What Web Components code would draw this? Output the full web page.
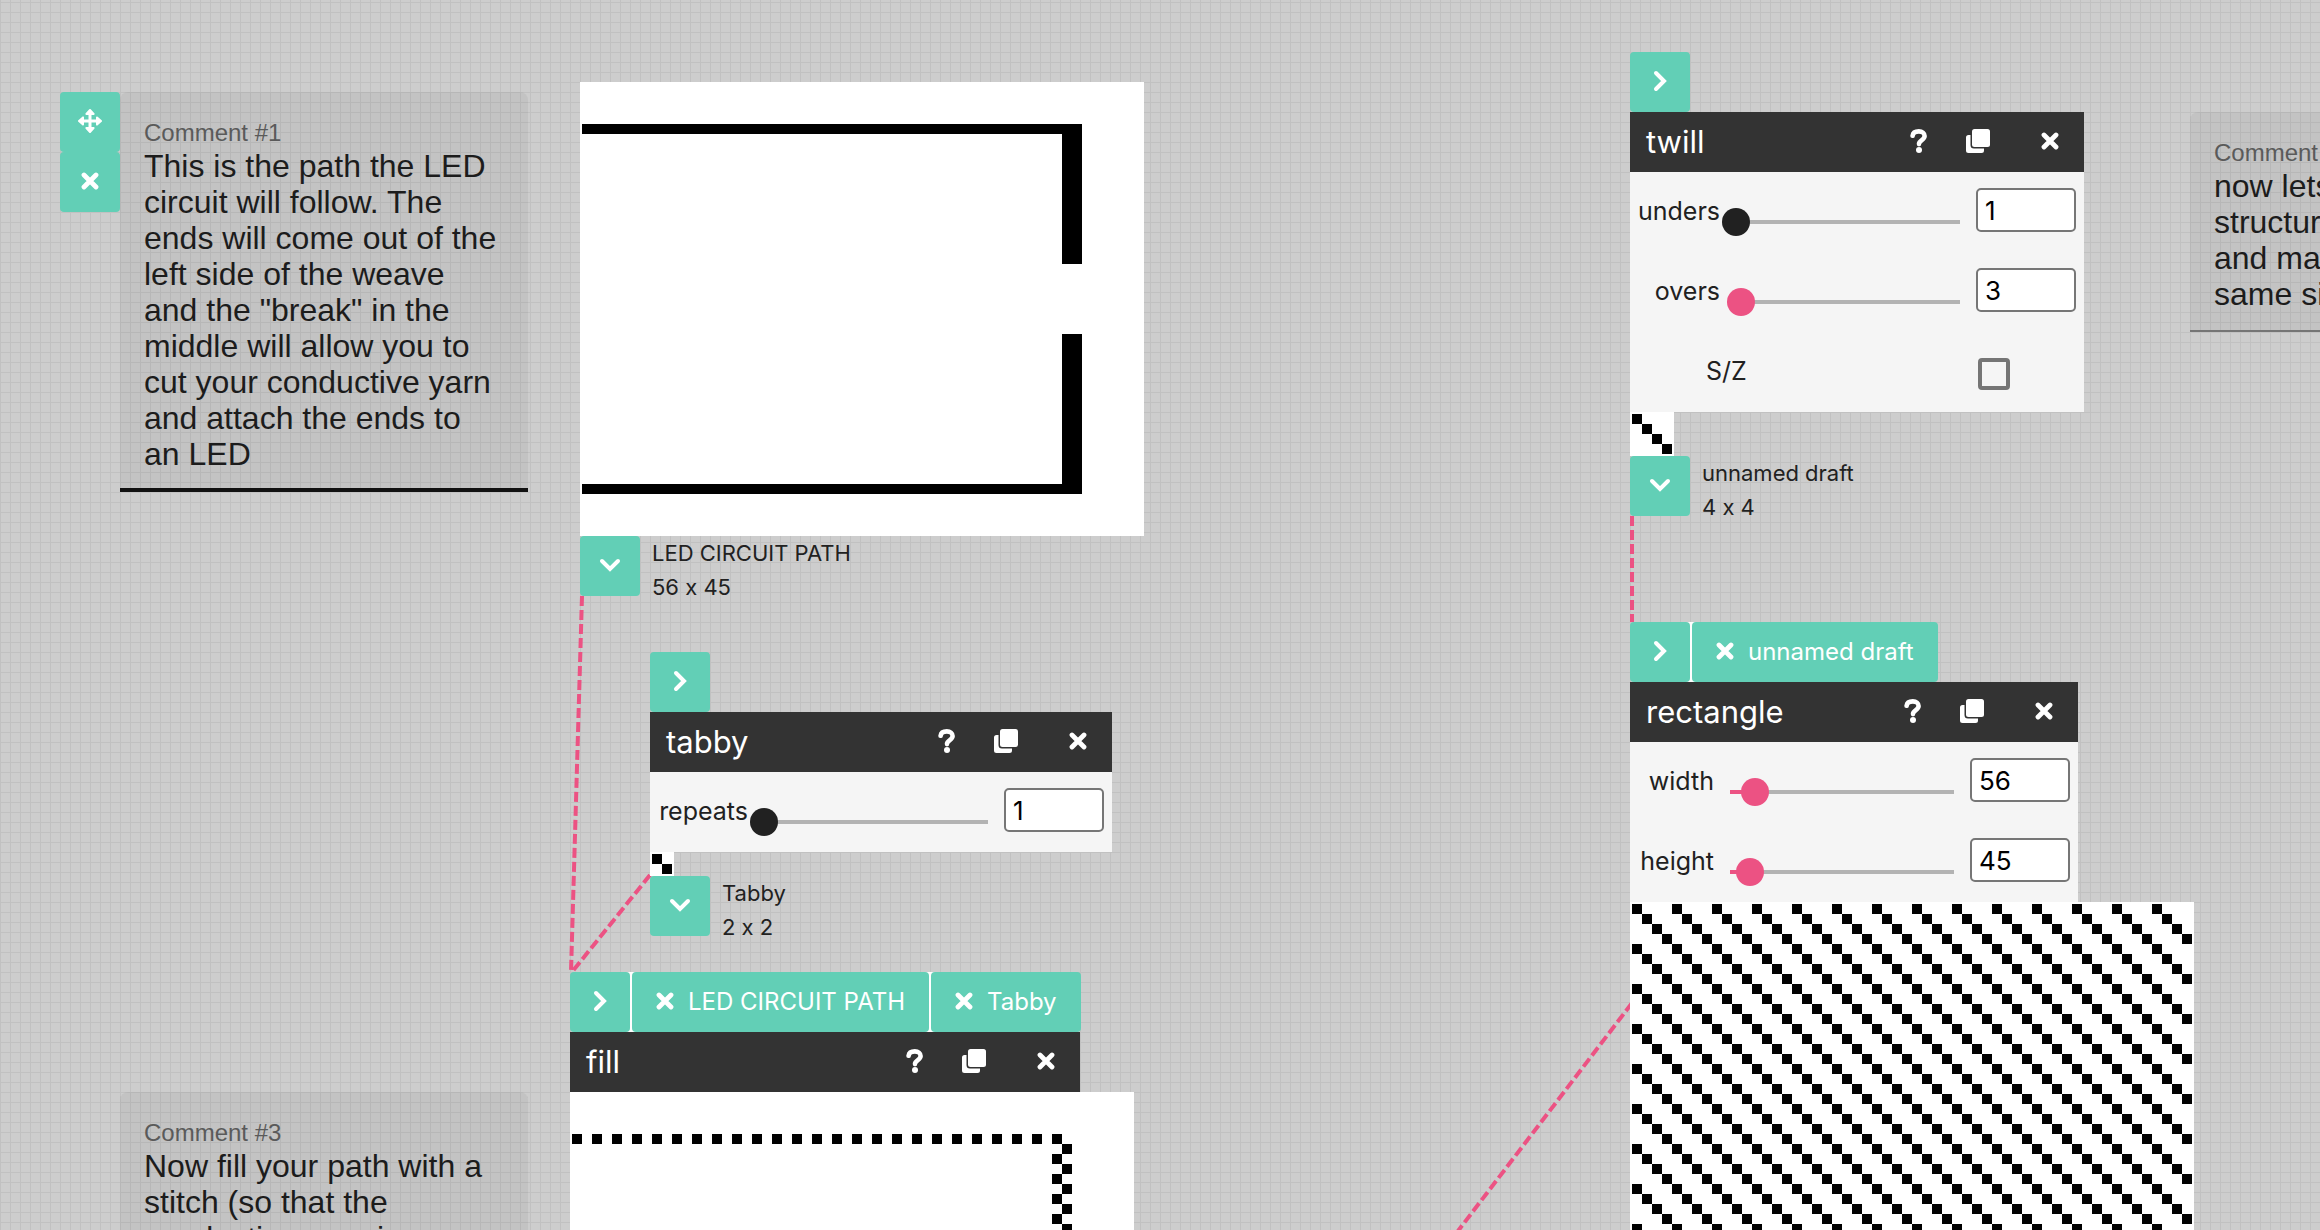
<!DOCTYPE html>
<html lang="en">
<head>
<meta charset="utf-8">
<title>Draft workspace</title>
<style>
  html, body { margin: 0; height: 100%; }
  body { overflow: hidden; color: #212121; font-family: Inter, "Liberation Sans", sans-serif; font-feature-settings: "calt" 0; }
</style>
</head>
<body>
<draft-workspace>
  <workspace-note style="left:60px;top:92px" heading="Comment #1" selected>This is the path the LED circuit will follow. The ends will come out of the left side of the weave and the "break" in the middle will allow you to cut your conductive yarn and attach the ends to an LED</workspace-note>
  <workspace-note style="left:120px;top:1092px" heading="Comment #3">Now fill your path with a stitch (so that the conductive yarn is continuously held in the cloth)</workspace-note>
  <workspace-note style="left:2190px;top:112px" heading="Comment #2">now lets create a twill structure of your choice and make sure it is the same size as the path</workspace-note>

  <workspace-node style="left:580px;top:82px">
    <draft-view pattern="circuit" cols="56" rows="45"></draft-view>
    <draft-outlet name="LED CIRCUIT PATH" size="56 x 45"></draft-outlet>
  </workspace-node>

  <workspace-node style="left:650px;top:652px">
    <inlet-bar></inlet-bar>
    <operation-header name="tabby"></operation-header>
    <param-list style="--label:90px">
      <param-slider label="repeats" value="1" max="100"></param-slider>
    </param-list>
    <draft-view pattern="tabby" cols="2" rows="2"></draft-view>
    <draft-outlet name="Tabby" size="2 x 2"></draft-outlet>
  </workspace-node>

  <workspace-node style="left:570px;top:972px">
    <inlet-bar inlets="LED CIRCUIT PATH|Tabby"></inlet-bar>
    <operation-header name="fill" style="--w:510px"></operation-header>
    <draft-view pattern="filled" cols="56" rows="45"></draft-view>
  </workspace-node>

  <workspace-node style="left:1630px;top:52px">
    <inlet-bar></inlet-bar>
    <operation-header name="twill"></operation-header>
    <param-list style="--label:82px">
      <param-slider label="unders" value="1" max="100"></param-slider>
      <param-slider label="overs" value="3" max="100"></param-slider>
      <param-check label="S/Z"></param-check>
    </param-list>
    <draft-view pattern="twill" cols="4" rows="4"></draft-view>
    <draft-outlet name="unnamed draft" size="4 x 4"></draft-outlet>
  </workspace-node>

  <workspace-node style="left:1630px;top:622px">
    <inlet-bar inlets="unnamed draft"></inlet-bar>
    <operation-header name="rectangle"></operation-header>
    <param-list style="--label:76px">
      <param-slider label="width" value="56" max="500"></param-slider>
      <param-slider label="height" value="45" max="500"></param-slider>
    </param-list>
    <draft-view pattern="twill" cols="56" rows="45"></draft-view>
  </workspace-node>
</draft-workspace>

<script>
const ICONS = {
  right: '<svg width="24" height="24" viewBox="0 0 24 24"><path d="M8 4l8 8-8 8" fill="none" stroke="#fff" stroke-width="4" stroke-linecap="round"/></svg>',
  down: '<svg width="24" height="24" viewBox="0 0 24 24"><path d="M4 8l8 8 8-8" fill="none" stroke="#fff" stroke-width="4" stroke-linecap="round"/></svg>',
  close: '<svg width="18" height="18" viewBox="0 0 18 18"><path d="M3 3l12 12M15 3L3 15" fill="none" stroke="#fff" stroke-width="4.800" stroke-linecap="round"/></svg>',
  move: '<svg width="24" height="24" viewBox="0 0 24 24"><path d="M12 3v18M3 12h18" stroke="#fff" stroke-width="3"/><path d="M12 1l3.600 4H8.400zM12 23l-3.600-4h7.200zM1 12l4-3.600v7.200zM23 12l-4 3.600V8.400z" fill="#fff" stroke="#fff" stroke-width="2" stroke-linejoin="round"/></svg>',
  help: '<svg width="18" height="24" viewBox="0 0 18 24"><path d="M2.600 6.800C3 4 5.200 2.400 8.800 2.400c3.600 0 5.800 1.800 5.800 4.700 0 4-5.600 3.900-5.600 8" fill="none" stroke="#fff" stroke-width="4.600" stroke-linecap="round"/><circle cx="9" cy="21" r="3" fill="#fff"/></svg>',
  copy: '<svg width="24" height="24" viewBox="0 0 24 24"><rect x="6" y="0" width="18" height="18" rx="2.500" fill="#fff"/><path d="M4.500 6H2.500A2.500 2.500 0 0 0 0 8.500v13A2.500 2.500 0 0 0 2.500 24h13a2.500 2.500 0 0 0 2.500-2.500v-2H8A3.500 3.500 0 0 1 4.500 16z" fill="#fff"/></svg>'
};
const BUTTON_CSS = `
  button { display: flex; align-items: center; justify-content: center; box-sizing: border-box;
    height: 60px; min-width: 60px; margin: 0; padding: 0; border: 0; border-radius: 4px;
    background: #62cfb6; color: #fff; font: 24px/60px Inter, "Liberation Sans", sans-serif; }
  svg { display: block; flex: none; margin-bottom: 2px; }`;

class Base extends HTMLElement {
  constructor() { super(); this.attachShadow({ mode: 'open' }); }
  connectedCallback() {
    this.shadowRoot.innerHTML = `<style>${this.css()}</style>${this.html()}`;
    this.ready();
  }
  attr(name) { return this.getAttribute(name) || ''; }
  ready() {}
}

customElements.define('draft-workspace', class extends Base {
  css() { return `
    :host { display: block; position: relative; height: 100vh; overflow: hidden; background-color: #cdcdcd;
      background-image: linear-gradient(90deg, #c1c1c1 1px, transparent 1px), linear-gradient(#c1c1c1 1px, transparent 1px);
      background-size: 10px 10px; background-position: 0 2px; }
    svg { position: absolute; inset: 0; width: 100%; height: 100%; }
    path { fill: none; stroke: #ec5283; stroke-width: 4; stroke-dasharray: 10 4; }`; }
  html() { return `<svg aria-hidden="true"><path d="M582 596L571 972"/><path d="M650 875L572 972"/><path d="M1632 516V622"/><path d="M1632 1003L1458 1231"/></svg><slot></slot>`; }
});

customElements.define('workspace-node', class extends Base {
  css() { return `:host { position: absolute; display: flex; flex-direction: column; align-items: flex-start; }`; }
  html() { return `<slot></slot>`; }
});

customElements.define('workspace-note', class extends Base {
  css() { return BUTTON_CSS + `
    :host { position: absolute; display: flex; align-items: flex-start; font-family: "Liberation Sans", sans-serif; }
    article { box-sizing: border-box; width: 408px; padding: 26px 24px 20px; border-radius: 8px 8px 0 0;
      background: rgba(0,0,0,.047); box-shadow: inset 0 -2px #757575; }
    :host([selected]) article { box-shadow: inset 0 -4px #111; }
    h2 { margin: 0; font-size: 24px; line-height: 30px; font-weight: 400; color: #5a5a5a; }
    p { margin: 0; font-size: 32px; line-height: 36px; color: #1c1c1c; }`; }
  html() {
    const tools = this.hasAttribute('selected')
      ? `<div><button aria-label="Move">${ICONS.move}</button><button aria-label="Delete">${ICONS.close}</button></div>` : '';
    return `${tools}<article><h2>${this.attr('heading')}</h2><p><slot></slot></p></article>`;
  }
});

customElements.define('inlet-bar', class extends Base {
  css() { return BUTTON_CSS + `
    :host { display: flex; gap: 2px; background: linear-gradient(#fff, #fff) 30px 0 / calc(100% - 60px) 100% no-repeat; }
    .tab { padding: 0 24px; gap: 14px; }`; }
  html() {
    const tabs = this.attr('inlets').split('|').filter(Boolean);
    return `<button aria-label="Add input">${ICONS.right}</button>` +
      tabs.map(t => `<button class="tab">${ICONS.close}<span>${t}</span></button>`).join('');
  }
});

customElements.define('operation-header', class extends Base {
  css() { return `
    :host { display: flex; align-items: center; box-sizing: border-box; width: var(--w); height: 60px; padding: 0 25px 0 16px; background: #333; color: #fff; }
    h2 { flex: 1; margin: 0; font-size: 31px; line-height: 60px; font-weight: 400; }
    button { display: flex; align-items: center; justify-content: center; height: 60px; margin: 0; padding: 0 0 2px; border: 0; background: none; }
    .help { margin-right: 38px; } .copy { margin-right: 51px; }`; }
  html() { return `<h2>${this.attr('name')}</h2>
    <button class="help" aria-label="Help">${ICONS.help}</button><button class="copy" aria-label="Duplicate">${ICONS.copy}</button><button aria-label="Delete">${ICONS.close}</button>`; }
  ready() {
    const list = this.parentElement.querySelector('param-list');
    if (list) this.style.setProperty('--w', `calc(${list.style.getPropertyValue('--label')} + 372px)`);
  }
});

customElements.define('param-list', class extends Base {
  css() { return `:host { display: flex; flex-direction: column; width: calc(var(--label) + 372px); background: rgba(248,248,248,.94); }`; }
  html() { return `<slot></slot>`; }
});

customElements.define('param-slider', class extends Base {
  css() { return `
    :host { display: flex; align-items: flex-start; box-sizing: border-box; height: 80px; padding: 16px 8px; color: #212121; }
    label { flex: none; width: var(--label); text-align: right; font-size: 25px; line-height: 46px; white-space: nowrap; }
    .range { appearance: none; flex: none; box-sizing: border-box; width: 252px; height: 28px; margin: 20px 2px 0; background: none; }
    .range::-webkit-slider-runnable-track { height: 28px;
      background: linear-gradient(90deg, #ec5283 var(--fill), #b3b3b3 var(--fill)) 14px 12px / 224px 4px no-repeat; }
    .range::-webkit-slider-thumb { appearance: none; width: 28px; height: 28px; border-radius: 50%; background: #ec5283; }
    .range.min::-webkit-slider-thumb { background: #212121; }
    .num { appearance: textfield; flex: none; box-sizing: border-box; width: 100px; height: 44px; margin: 0; padding: 0 7px; border: 2px solid #767676; border-radius: 5px; background: #fff; color: #000; font: 26px Inter, "Liberation Sans", sans-serif; }
    .num::-webkit-inner-spin-button { appearance: none; margin: 0; }`; }
  html() {
    const v = +this.attr('value'), max = +this.attr('max');
    const fill = (v - 1) / (max - 1) * 224;
    return `<label for="n">${this.attr('label')}</label><input class="range${v === 1 ? ' min' : ''}" style="--fill:${fill}px" type="range" min="1" max="${max}" value="${v}" aria-label="${this.attr('label')}"><input class="num" id="n" type="number" value="${v}">`;
  }
});

customElements.define('param-check', class extends Base {
  css() { return `
    :host { display: flex; align-items: flex-start; justify-content: space-between; box-sizing: border-box; height: 80px; padding: 16px 74px 16px 76px; }
    label { font-size: 25px; line-height: 46px; }
    input { appearance: none; box-sizing: border-box; width: 32px; height: 32px; margin: 10px 0 0; border: 4px solid #757575; border-radius: 4px; }`; }
  html() { return `<label for="c">${this.attr('label')}</label><input id="c" type="checkbox">`; }
});

const PATTERNS = {
  tabby: (r, c) => (r + c) % 2 === 0,
  twill: (r, c) => (c - r + 400) % 4 === 0,
  circuit: (r, c) => c < 50 && (r === 4 || r === 40 || (c > 47 && ((r > 4 && r < 18) || (r > 24 && r < 40)))),
  filled: (r, c) => PATTERNS.circuit(r, c) && PATTERNS.tabby(r, c)
};
customElements.define('draft-view', class extends Base {
  css() { return `:host { display: block; padding: 2px; background: #fff; } svg { display: block; }`; }
  html() {
    const cols = +this.attr('cols'), rows = +this.attr('rows'), on = PATTERNS[this.attr('pattern')];
    let d = '';
    for (let r = 0; r < rows; r++) for (let c = 0; c < cols; c++) if (on(r, c)) d += `M${c * 10} ${r * 10}h10v10h-10z`;
    return `<svg width="${cols * 10}" height="${rows * 10}" aria-hidden="true"><path d="${d}"/></svg>`;
  }
});

customElements.define('draft-outlet', class extends Base {
  css() { return BUTTON_CSS + `
    :host { display: flex; gap: 12px; height: 60px; }
    p { margin: 0; font-size: 22px; line-height: 34px; white-space: nowrap; }`; }
  html() { return `<button aria-label="Connect output">${ICONS.down}</button><div><p>${this.attr('name')}</p><p>${this.attr('size')}</p></div>`; }
});
</script>
</body>
</html>
